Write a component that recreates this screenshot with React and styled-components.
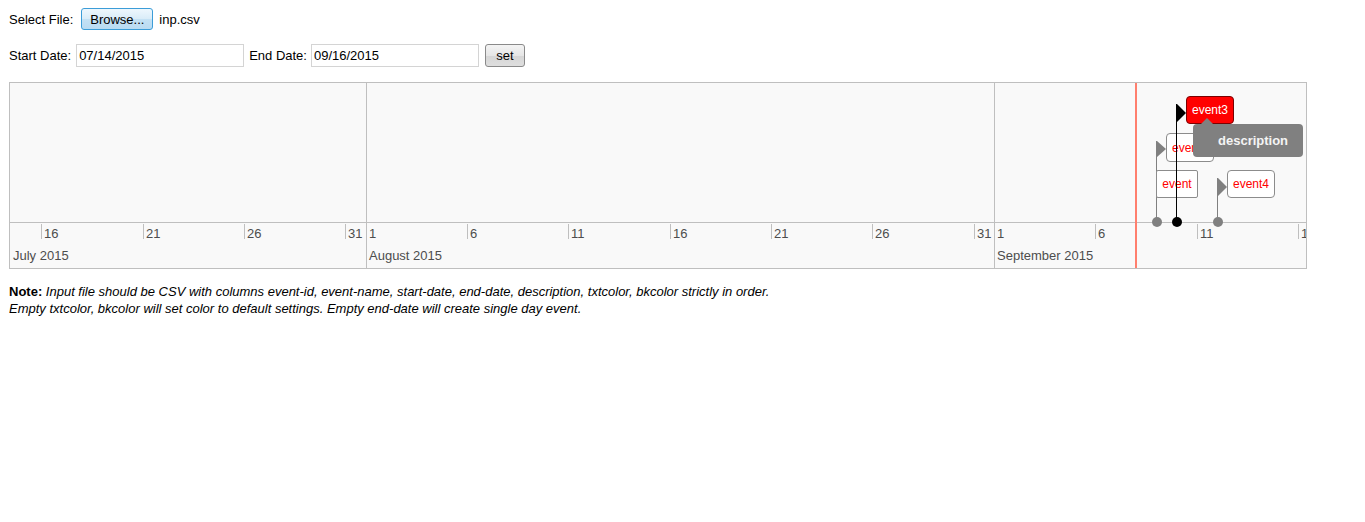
import React from 'react'
import styled, { createGlobalStyle } from 'styled-components'

const GlobalStyle = createGlobalStyle`
	body {
		margin: 8px;
		background: #ffffff;
		font-family: "Liberation Sans", Arial, sans-serif;
		font-size: 13px;
		color: #000;
	}
`

const Page = styled.div`
	display: flex;
	flex-direction: column;
	align-items: flex-start;
`

const Row = styled.div`
	display: flex;
	align-items: center;
	height: ${props => props.height}px;
	margin-top: ${props => props.top || 0}px;
	margin-left: 1px;
`

const Label = styled.span`
	font-size: 13px;
	margin-right: ${props => props.gap}px;
	margin-left: ${props => props.lead || 0}px;
`

const Browse = styled.button`
	width: 72px;
	height: 22px;
	padding: 0;
	margin-right: 6px;
	border: 1px solid #3c9dd8;
	border-radius: 3px;
	background: linear-gradient(#eef7fd, #d9ecf8 50%, #c4e1f4 51%, #b9dbf2);
	font-family: inherit;
	font-size: 13px;
	color: #000;
`

const DateInput = styled.input`
	box-sizing: border-box;
	width: 168px;
	height: 23px;
	padding: 1px 2px;
	border: 1px solid #d4d4d4;
	font-family: inherit;
	font-size: 13px;
	color: #000;
	outline: none;
`

const SetButton = styled.button`
	box-sizing: border-box;
	width: 40px;
	height: 23px;
	margin-left: 6px;
	padding: 0;
	border: 1px solid #8a8a8a;
	border-radius: 3px;
	background: linear-gradient(#f4f4f4, #e6e6e6 50%, #d6d6d6 51%, #dedede);
	font-family: inherit;
	font-size: 13px;
	color: #000;
`

const Frame = styled.div`
	position: relative;
	box-sizing: border-box;
	width: 1298px;
	height: 187px;
	margin-top: 15px;
	margin-left: 1px;
	border: 1px solid #bfbfbf;
	background: #f9f9f9;
	display: flex;
	flex-direction: column;
	overflow: hidden;
`

const ItemsPanel = styled.div`
	position: relative;
	height: 139px;
	border-bottom: 1px solid #bfbfbf;
	flex: none;
`

const AxisPanel = styled.div`
	position: relative;
	flex: 1;
	color: #4d4d4d;
`

const MajorLine = styled.div`
	position: absolute;
	top: 0;
	bottom: 0;
	width: 1px;
	background: #bfbfbf;
`

const NowLine = styled.div`
	position: absolute;
	top: 0;
	bottom: 0;
	width: 2px;
	background: #ff7f6e;
	z-index: 1;
`

const MinorTick = styled.div`
	position: absolute;
	top: 1px;
	height: 15px;
	width: 1px;
	background: #bfbfbf;
`

const MinorLabel = styled.span`
	position: absolute;
	top: 3px;
	font-size: 13px;
	line-height: 15px;
`

const MajorLabel = styled.span`
	position: absolute;
	top: 25px;
	font-size: 13px;
	line-height: 16px;
`

const Stem = styled.div`
	position: absolute;
	width: 1px;
	bottom: 0;
	background: ${props => props.color};
	z-index: ${props => props.z};
`

const Flag = styled.div`
	position: absolute;
	width: 0;
	height: 0;
	border-top: ${props => props.h / 2}px solid transparent;
	border-bottom: ${props => props.h / 2}px solid transparent;
	border-left: 9px solid ${props => props.color};
	z-index: ${props => props.z};
`

const Box = styled.div`
	position: absolute;
	box-sizing: border-box;
	height: ${props => props.h}px;
	padding: 0 5px;
	border: 1px solid ${props => (props.selected ? '#7a0000' : '#8c8c8c')};
	border-radius: ${props => (props.range ? 2 : 4)}px;
	background: ${props => (props.selected ? '#ff0000' : '#ffffff')};
	color: ${props => (props.selected ? '#ffffff' : '#ff0000')};
	font-size: 12px;
	display: flex;
	align-items: center;
	justify-content: center;
	white-space: nowrap;
	z-index: ${props => props.z};
`

const Dot = styled.div`
	position: absolute;
	top: 134px;
	width: 10px;
	height: 10px;
	margin-left: -4px;
	border-radius: 50%;
	background: ${props => props.color};
	z-index: 5;
`

const Tooltip = styled.div`
	position: absolute;
	left: 1183px;
	top: 41px;
	box-sizing: border-box;
	width: 110px;
	height: 33px;
	padding-left: 25px;
	border-radius: 4px;
	background: #808080;
	color: #f4f4f4;
	font-size: 13px;
	font-weight: bold;
	display: flex;
	align-items: center;
	z-index: 10;

	&::before {
		content: '';
		position: absolute;
		left: 8px;
		top: -6px;
		border-left: 6px solid transparent;
		border-right: 6px solid transparent;
		border-bottom: 6px solid #808080;
	}
`

const Note = styled.div`
	margin-top: 14px;
	margin-left: 1px;
	font-size: 13px;
	line-height: 17px;
	font-style: italic;

	b {
		font-style: normal;
	}
`

// day 0 = July 16 2015, frame inner left edge sits at page x 10
const PX_PER_DAY = 20.27
const dayX = (d) => Math.round(31.3 + d * PX_PER_DAY)

const dayIndex = (month, day) => (month === 7 ? day - 16 : month === 8 ? 15 + day : 46 + day)

const minorDays = [
	[7, 16], [7, 21], [7, 26], [7, 31],
	[8, 1], [8, 6], [8, 11], [8, 16], [8, 21], [8, 26], [8, 31],
	[9, 1], [9, 6], [9, 11], [9, 16],
]

const majors = [
	{ name: 'July 2015', x: 3 },
	{ name: 'August 2015', x: dayX(dayIndex(8, 1)) + 3 },
	{ name: 'September 2015', x: dayX(dayIndex(9, 1)) + 3 },
]

const points = [
	{ name: 'event2', day: dayIndex(9, 9), top: 50, flagTop: 58, h: 29, flagH: 17, color: '#808080', z: 2 },
	{ name: 'event4', day: dayIndex(9, 12), top: 87, flagTop: 95, h: 28, flagH: 19, color: '#808080', z: 2 },
	{ name: 'event3', day: dayIndex(9, 10), top: 13, flagTop: 21, h: 28, flagH: 19, color: '#000000', z: 4, selected: true },
]

const App = () => {
	const rangeStart = dayX(dayIndex(9, 9))
	const rangeEnd = dayX(dayIndex(9, 11))

	return (
		<Page>
			<GlobalStyle />
			<Row height={22}>
				<Label gap={8}>Select File:</Label>
				<Browse type='button'>Browse...</Browse>
				<span>inp.csv</span>
			</Row>
			<Row height={23} top={14}>
				<Label gap={5}>Start Date:</Label>
				<DateInput defaultValue='07/14/2015' />
				<Label gap={4} lead={5}>End Date:</Label>
				<DateInput defaultValue='09/16/2015' />
				<SetButton type='button'>set</SetButton>
			</Row>
			<Frame>
				{minorDays.filter(([, d]) => d === 1).map(([m, d]) => (
					<MajorLine key={m} style={{ left: dayX(dayIndex(m, d)) }} />
				))}
				<NowLine style={{ left: dayX(dayIndex(9, 8)) - 1 }} />
				<ItemsPanel>
					<Box range h={28} z={3} style={{ left: rangeStart, top: 87, width: rangeEnd - rangeStart + 1 }}>event</Box>
					{points.map(p => {
						const x = dayX(p.day)
						return (
							<React.Fragment key={p.name}>
								<Stem color={p.color} z={p.z === 4 ? 4 : 1} style={{ left: x, top: p.flagTop }} />
								<Flag color={p.color} h={p.flagH} z={p.z} style={{ left: x + 1, top: p.flagTop }} />
								<Box selected={p.selected} h={p.h} z={p.z} style={{ left: x + 10, top: p.top }}>{p.name}</Box>
								<Dot color={p.color} style={{ left: x }} />
							</React.Fragment>
						)
					})}
					<Tooltip>description</Tooltip>
				</ItemsPanel>
				<AxisPanel>
					{minorDays.map(([m, d]) => {
						const x = dayX(dayIndex(m, d))
						return (
							<React.Fragment key={`${m}-${d}`}>
								{d !== 1 && <MinorTick style={{ left: x }} />}
								<MinorLabel style={{ left: x + 3 }}>{d}</MinorLabel>
							</React.Fragment>
						)
					})}
					{majors.map(mj => (
						<MajorLabel key={mj.name} style={{ left: mj.x }}>{mj.name}</MajorLabel>
					))}
				</AxisPanel>
			</Frame>
			<Note>
				<b>Note:</b> Input file should be CSV with columns event-id, event-name, start-date, end-date, description, txtcolor, bkcolor strictly in order.
				<br />
				Empty txtcolor, bkcolor will set color to default settings. Empty end-date will create single day event.
			</Note>
		</Page>
	)
}

export default App
